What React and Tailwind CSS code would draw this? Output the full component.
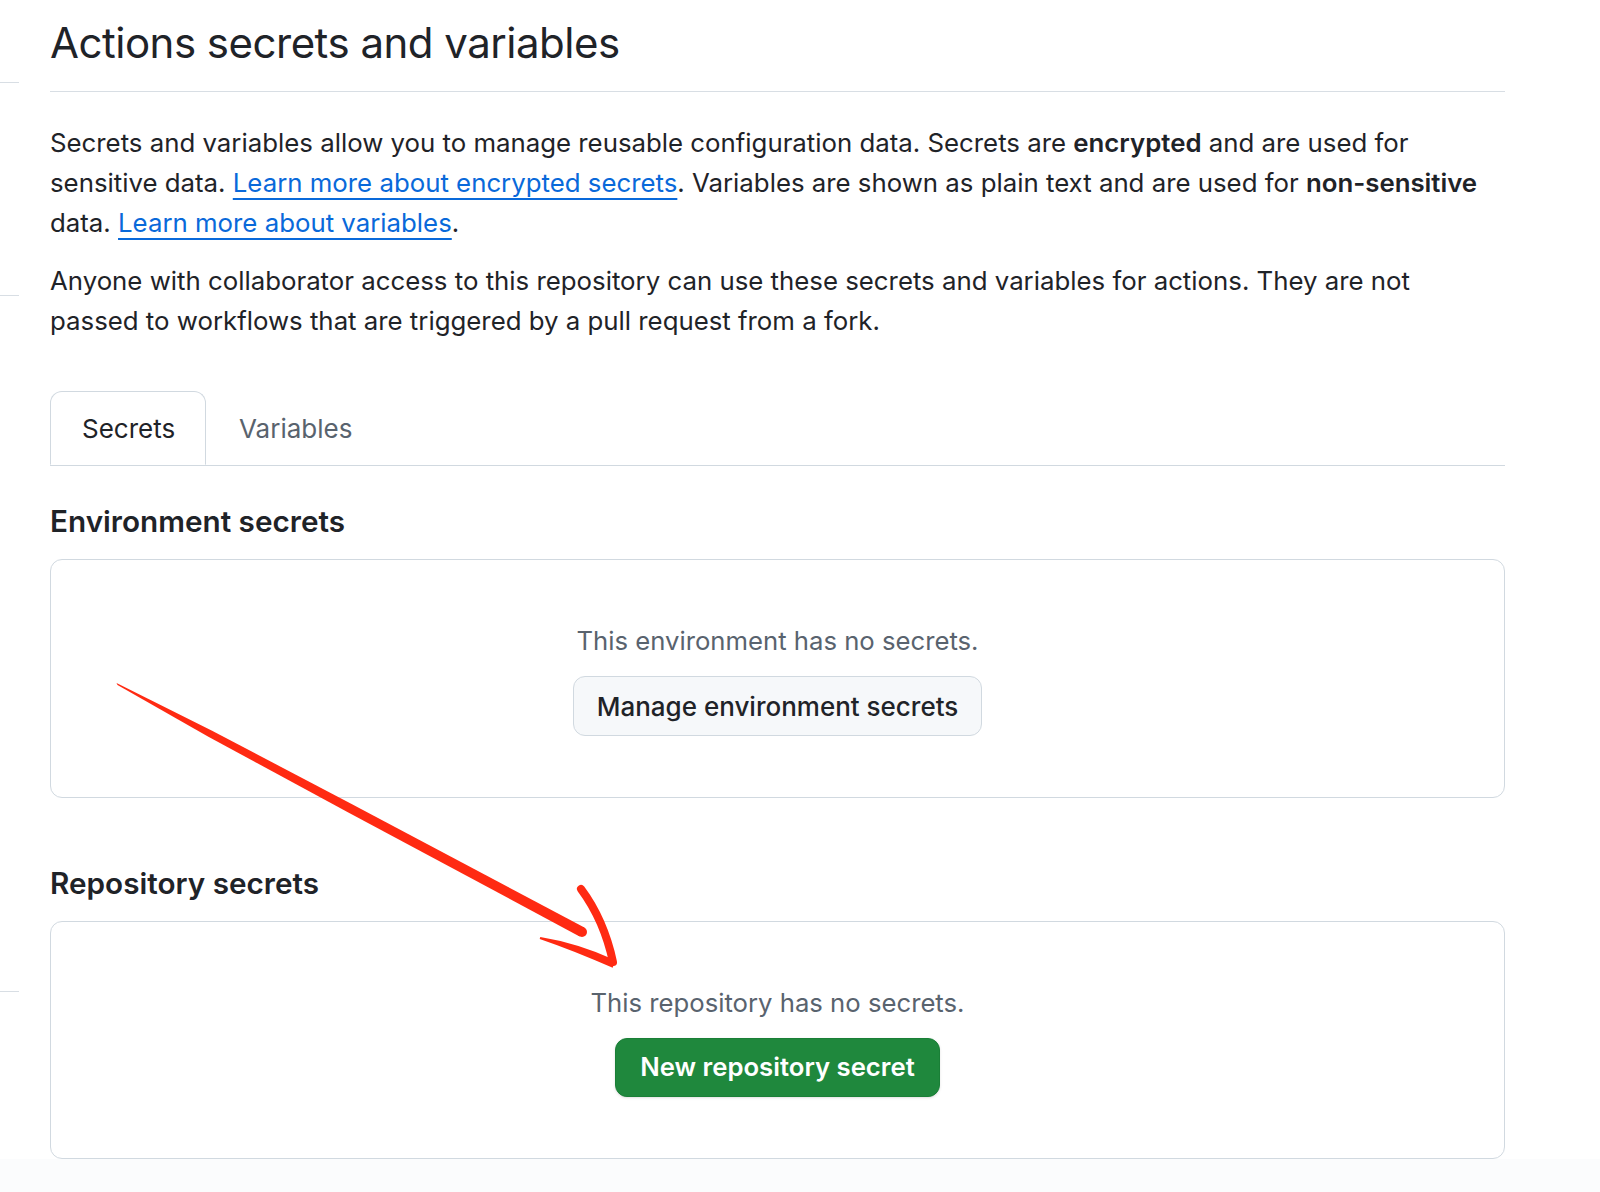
import React from "react";

const Arrow = () => (
  <svg
    className="absolute inset-0 pointer-events-none"
    width="1600"
    height="1192"
    viewBox="0 0 1600 1192"
  >
    {/* shaft, thin at the start, thick at the end */}
    <path
      d="M116.5 683.1 L211.6 730.5 L351.6 804 L584.4 927.6 L579.6 936.4 L347.4 812 L208.4 736.7 L117.5 684.9 Z"
      fill="#ff2a12"
    />
    <circle cx="582" cy="932" r="5" fill="#ff2a12" />
    {/* arrow head */}
    <path
      d="M581 889 Q604 920 613 962"
      stroke="#ff2a12"
      strokeWidth="8"
      strokeLinecap="round"
      fill="none"
    />
    <path d="M615.3 960.2 Q577 943 540.3 937.1 L539.7 938.9 Q575 951 612.7 967.8 Z" fill="#ff2a12" />
  </svg>
);

const EmptyBox = ({ text, children }) => (
  <div className="border border-[#d1d9e0] rounded-xl py-[61px] flex flex-col items-center">
    <p className="text-[25.7px] leading-[40px] text-[#59636e]">{text}</p>
    <div className="mt-[15px]">{children}</div>
  </div>
);

export default function App() {
  return (
    <div className="relative min-h-[1192px] flex flex-col bg-white text-[#1f2328] font-['Inter',sans-serif]">
      <div className="flex bg-white">
        {/* cut off sidebar */}
        <div className="w-[19px] shrink-0">
          <div className="mt-[82px] h-px bg-[#d8dee4]" />
          <div className="mt-[212px] h-px bg-[#d8dee4]" />
          <div className="mt-[695px] h-px bg-[#d8dee4]" />
        </div>

        <div className="ml-[31px] w-[1455px]">
          <div className="pt-[15px] pb-[20px] border-b border-[#d8dee4]">
            <h1 className="text-[42px] leading-[56px] tracking-[-0.5px]">Actions secrets and variables</h1>
          </div>

          <div className="text-[25.8px] leading-[40px] mt-[31px]">
            <p>
              Secrets and variables allow you to manage reusable configuration data. Secrets are{" "}
              <b className="font-semibold">encrypted</b> and are used for sensitive data.{" "}
              <a className="text-[#0969da] underline underline-offset-[6px] decoration-[1.5px]">
                Learn more about encrypted secrets
              </a>
              . Variables are shown as plain text and are used for{" "}
              <b className="font-semibold whitespace-nowrap">non-sensitive</b> data.{" "}
              <a className="text-[#0969da] underline underline-offset-[6px] decoration-[1.5px]">
                Learn more about variables
              </a>
              .
            </p>
            <p className="mt-[18px]">
              Anyone with collaborator access to this repository can use these secrets and variables for
              actions. They are not passed to workflows that are triggered by a pull request from a fork.
            </p>
          </div>

          {/* tabs */}
          <div className="mt-[50px] flex border-b border-[#d1d9e0] text-[26px]">
            <div className="-mb-px w-[156px] h-[74px] flex items-center pl-[31px] border border-b-white border-[#d1d9e0] rounded-t-xl bg-white">
              Secrets
            </div>
            <div className="h-[74px] flex items-center pl-[33px] text-[#59636e]">Variables</div>
          </div>

          <h3 className="mt-[37px] mb-[20px] text-[29.7px] leading-[36px] font-semibold">Environment secrets</h3>
          <EmptyBox text="This environment has no secrets.">
            <button className="h-[60px] px-[23px] rounded-xl border border-[#d1d9e0] bg-[#f6f8fa] text-[26px] font-medium">
              Manage environment secrets
            </button>
          </EmptyBox>

          <h3 className="mt-[67px] mb-[20px] text-[29.7px] leading-[36px] font-semibold">Repository secrets</h3>
          <EmptyBox text="This repository has no secrets.">
            <button className="h-[59px] px-[24px] rounded-xl border border-[#1a7f37] bg-[#1f883d] text-white text-[25.7px] font-semibold shadow-sm">
              New repository secret
            </button>
          </EmptyBox>
        </div>
      </div>
      <div className="flex-1 bg-[#fbfcfd]" />
      <Arrow />
    </div>
  );
}
